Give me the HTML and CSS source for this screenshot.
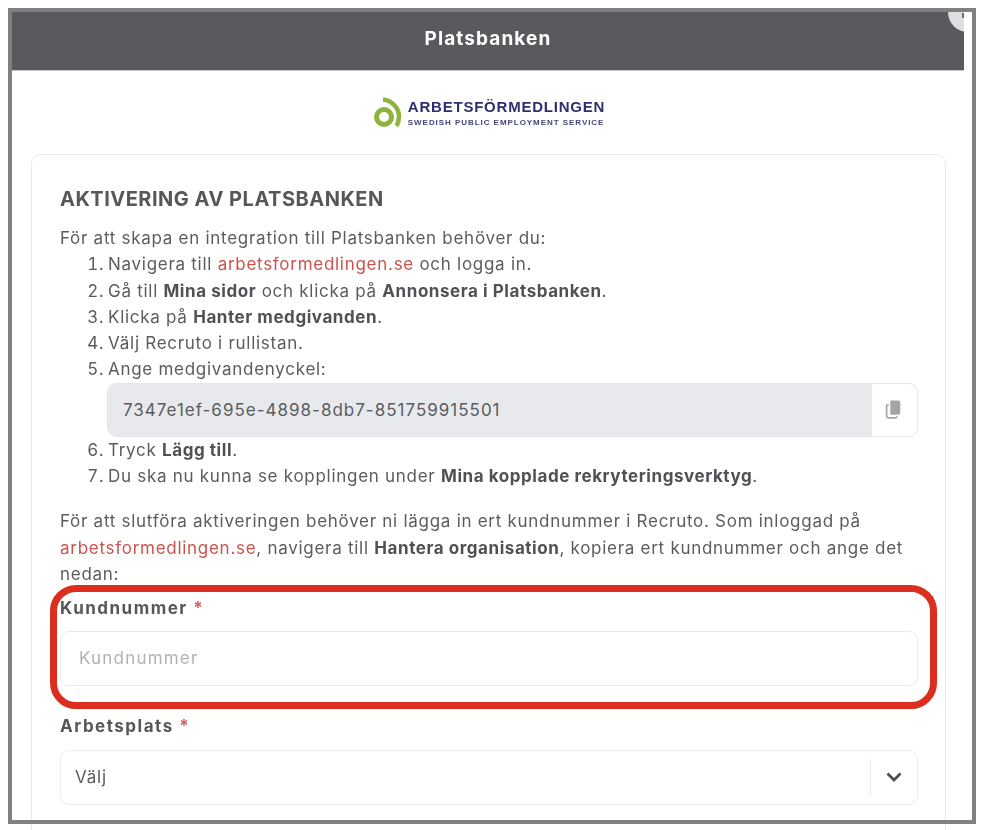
FILE: index.html
```html
<!DOCTYPE html>
<html lang="sv">
<head>
<meta charset="utf-8">
<title>Platsbanken</title>
<link rel="stylesheet" href="styles.css">
</head>
<body>
<div class="modal">
  <header class="modal-head">
    <h1>Platsbanken</h1>
    <span class="close"><span class="close-dot"></span></span>
  </header>
  <div class="logo">
    <svg class="logo-mark" width="32" height="32" viewBox="0 0 32 32" aria-hidden="true">
      <circle cx="11" cy="20" r="7.5" fill="none" stroke="#8db33c" stroke-width="5"/>
      <path d="M10 2.500C19 3.500 26 11 26 19.500C26 23 25 26.500 23.500 29" fill="none" stroke="#8db33c" stroke-width="4.500"/>
    </svg>
    <div class="logo-text">
      <div class="logo-name">ARBETSFÖRMEDLINGEN</div>
      <div class="logo-sub">SWEDISH PUBLIC EMPLOYMENT SERVICE</div>
    </div>
  </div>
  <section class="card">
    <h2>AKTIVERING AV PLATSBANKEN</h2>
    <p>För att skapa en integration till Platsbanken behöver du:</p>
    <ol>
      <li>Navigera till <a href="#">arbetsformedlingen.se</a> och logga in.</li>
      <li>Gå till <b>Mina sidor</b> och klicka på <b>Annonsera i Platsbanken</b>.</li>
      <li>Klicka på <b>Hanter medgivanden</b>.</li>
      <li>Välj Recruto i rullistan.</li>
      <li>Ange medgivandenyckel:
        <div class="key">
          <span class="key-value">7347e1ef-695e-4898-8db7-851759915501</span>
          <span class="key-copy">
            <svg width="19" height="21" viewBox="0 0 18 20" aria-hidden="true">
              <path d="M6 1.500h6.500a2 2 0 0 1 2 2v9.500a2 2 0 0 1-2 2H6a1 1 0 0 1-1-1V2.500a1 1 0 0 1 1-1z" fill="#a3a5a8"/>
              <path d="M3.500 5.500H3a1.500 1.500 0 0 0-1.500 1.500v9.500A1.500 1.500 0 0 0 3 18h7a1.500 1.500 0 0 0 1.500-1.500" fill="none" stroke="#a3a5a8" stroke-width="1.600"/>
            </svg>
          </span>
        </div>
      </li>
      <li>Tryck <b>Lägg till</b>.</li>
      <li>Du ska nu kunna se kopplingen under <b>Mina kopplade rekryteringsverktyg</b>.</li>
    </ol>
    <p class="outro">För att slutföra aktiveringen behöver ni lägga in ert kundnummer i Recruto. Som inloggad på <a href="#">arbetsformedlingen.se</a>, navigera till <b>Hantera organisation</b>, kopiera ert kundnummer och ange det nedan:</p>
    <label class="field-label" for="kund">Kundnummer <span class="req">*</span></label>
    <input class="field" id="kund" type="text" placeholder="Kundnummer">
    <label class="field-label second" for="plats">Arbetsplats <span class="req">*</span></label>
    <div class="select" id="plats">
      <span class="select-value">Välj</span>
      <span class="select-arrow">
        <svg width="18" height="12" viewBox="0 0 18 12" aria-hidden="true"><path d="M2.500 2.500L9 9l6.500-6.500" fill="none" stroke="#4b4d50" stroke-width="2.800"/></svg>
      </span>
    </div>
  </section>
</div>
<div class="frame"></div>
<div class="highlight"></div>
</body>
</html>
```

FILE: styles.css
```css
* { box-sizing: border-box; }
html, body { height: 830px; overflow: hidden; }
body {
  margin: 0;
  background: #fff;
  font-family: Inter, "Liberation Sans", sans-serif;
  font-size: 17px;
  line-height: 26.3px;
  letter-spacing: 0.72px;
  color: #5a5c5f;
}
.modal {
  margin-left: 12px;
  padding-top: 12px;
  width: 952px;
  filter: blur(0.6px);
}
.modal-head {
  position: relative;
  height: 59px;
  padding-bottom: 4px;
  background: #585a5e;
  border-bottom: 1px solid #c5c8cf;
  display: flex;
  align-items: center;
  justify-content: center;
  overflow: hidden;
}
.modal-head h1 {
  margin: 0;
  font-size: 19px;
  font-weight: 700;
  letter-spacing: 1.1px;
  color: #fff;
}
.close {
  position: absolute;
  top: -20px;
  right: -24px;
  width: 40px;
  height: 40px;
  border-radius: 50%;
  background: #dedfe0;
}
.close-dot {
  position: absolute;
  left: 14px;
  top: 21px;
  width: 4px;
  height: 5px;
  background: #6a6c70;
}
.logo {
  height: 83px;
  display: flex;
  align-items: center;
  justify-content: center;
  gap: 3px;
  padding-left: 2px;
}
.logo-mark { flex: none; }
.logo-text { color: #2e2f6e; font-family: "Liberation Sans", sans-serif; font-weight: 700; }
.logo-name { font-size: 15px; line-height: 18px; letter-spacing: 0.78px; }
.logo-sub { font-size: 8px; line-height: 11px; letter-spacing: 0.95px; white-space: nowrap; color: #44457c; margin-top: 1px; }
.card {
  margin: 0 18px 0 19px;
  padding: 30px 27px 40px 28px;
  height: 700px;
  border: 1px solid #e6e7ec;
  border-radius: 10px;
}
h2 {
  margin: 0 0 12px;
  font-size: 20px;
  line-height: 28px;
  font-weight: 700;
  letter-spacing: 0.5px;
  color: #55575a;
}
p { margin: 0; }
ol { margin: 0; padding-left: 48px; }
li::marker { content: counter(list-item) ".\2009"; }
b { font-weight: 700; letter-spacing: 0.56px; color: #4f5154; }
a { color: #c9544e; text-decoration: none; }
.key {
  display: flex;
  height: 54px;
  margin: 0 0 0 -1px;
  border: 1px solid #e6e7ec;
  border-radius: 9px;
  overflow: hidden;
}
.key-value {
  flex: 1;
  display: flex;
  align-items: center;
  padding-left: 15px;
  letter-spacing: 1px;
  background: #e8e9ec;
}
.key-copy {
  flex: none;
  width: 45px;
  display: flex;
  align-items: center;
  justify-content: center;
}
.outro { margin-top: 19px; }
.field-label {
  display: block;
  margin-top: 8px;
  font-weight: 700;
  letter-spacing: 1.5px;
  color: #55575a;
}
.field-label.second { margin-top: 27px; }
.req { color: #d9605a; }
.field {
  display: block;
  width: 100%;
  height: 55px;
  margin-top: 9px;
  padding: 0 18px;
  border: 1px solid #e8e9ed;
  border-radius: 9px;
  font: inherit;
  letter-spacing: 1.2px;
  outline: none;
}
.field::placeholder { color: #b0b2b5; opacity: 1; }
.select {
  display: flex;
  align-items: stretch;
  height: 55px;
  margin-top: 11px;
  border: 1px solid #ebecef;
  border-radius: 9px;
}
.select-value { flex: 1; display: flex; align-items: center; padding-left: 14px; }
.select-arrow {
  flex: none;
  width: 47px;
  margin: 8px 0;
  border-left: 1px solid #ebecef;
  display: flex;
  align-items: center;
  justify-content: center;
}
.frame {
  position: absolute;
  left: 8px;
  top: 8px;
  width: 968px;
  height: 816px;
  border: 4px solid #808080;
  pointer-events: none;
}
.highlight {
  position: absolute;
  left: 50px;
  top: 585px;
  width: 887px;
  height: 124px;
  border: 7px solid #dc2e1f;
  border-radius: 26px;
  pointer-events: none;
}
```
